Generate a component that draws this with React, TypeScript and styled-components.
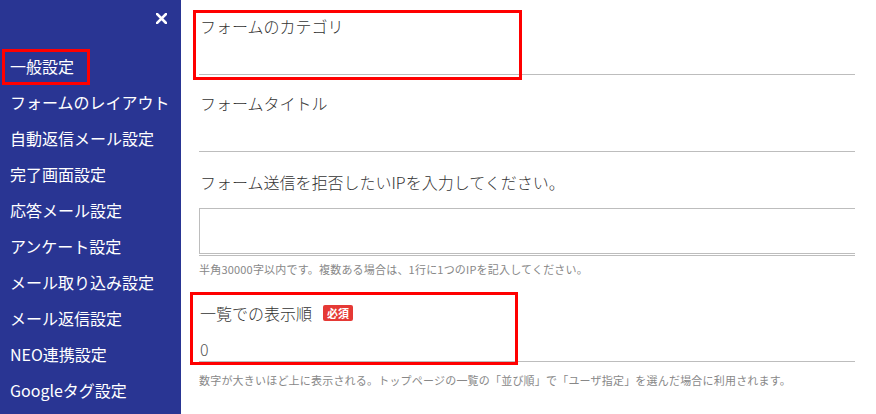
import React from 'react';
import styled, { createGlobalStyle } from 'styled-components';

const GlobalStyle = createGlobalStyle`
  html, body {
    margin: 0;
    padding: 0;
    background: #fff;
    overflow: hidden;
  }
  body {
    font-family: "Noto Sans CJK JP", "Noto Sans", sans-serif;
    color: #333;
  }
`;

const Page = styled.div`
  display: flex;
  width: 876px;
  height: 414px;
`;

const Sidebar = styled.nav`
  width: 181px;
  flex-shrink: 0;
  background-color: #293593;
  color: #fff;
  display: flex;
  flex-direction: column;
`;

const CloseRow = styled.div`
  height: 49px;
  display: flex;
  justify-content: flex-end;
  align-items: flex-start;
  padding: 13px 14px 0 0;
  box-sizing: border-box;
`;

const CloseButton = styled.button`
  background: none;
  border: none;
  padding: 0;
  width: 11px;
  height: 11px;
  cursor: pointer;
  display: flex;
`;

const MenuList = styled.ul`
  list-style: none;
  margin: 0;
  padding: 0;
`;

const MenuItem = styled.li<{ $highlighted?: boolean }>`
  position: relative;
  height: 36px;
  line-height: 35px;
  padding-left: 10px;
  font-size: 16px;
  white-space: nowrap;

  &::after {
    content: '';
    display: ${p => (p.$highlighted ? 'block' : 'none')};
    position: absolute;
    left: 2px;
    top: 0;
    width: 88px;
    height: 36px;
    border: 3px solid #ff0000;
    box-sizing: border-box;
  }
`;

const Main = styled.main`
  flex: 1;
  padding: 0 21px 0 18px;
  display: flex;
  flex-direction: column;
`;

const Field = styled.div<{ $top: number }>`
  position: relative;
  padding-top: ${p => p.$top}px;
`;

const Label = styled.div`
  font-size: 16px;
  font-weight: 300;
  line-height: 24px;
  padding-left: 1px;
  display: flex;
  align-items: center;
`;

const LineInput = styled.div`
  height: 36px;
  border-bottom: 1px solid #bdbdbd;
  font-size: 16px;
  font-weight: 300;
  line-height: 24px;
  color: #555;
  display: flex;
  align-items: flex-end;
  padding-left: 1px;
`;

const AreaWrap = styled.div`
  margin-top: 14px;
  padding-bottom: 1px;
  border-bottom: 1px solid #bdbdbd;
`;

const TextArea = styled.div`
  height: 44px;
  border: 1px solid #bdbdbd;
  border-right: none;
`;

const Hint = styled.div<{ $gap: number }>`
  margin-top: ${p => p.$gap}px;
  font-size: 11px;
  line-height: 16px;
  letter-spacing: 0.2px;
  color: #888;
  white-space: nowrap;
`;

const Badge = styled.span`
  margin-left: 11px;
  background: #e53935;
  color: #fff;
  font-size: 11px;
  font-weight: 700;
  line-height: 16px;
  height: 16px;
  padding: 0 4px;
  border-radius: 2px;
`;

const Highlight = styled.div<{ $left: number; $top: number; $w: number; $h: number }>`
  position: absolute;
  left: ${p => p.$left}px;
  top: ${p => p.$top}px;
  width: ${p => p.$w}px;
  height: ${p => p.$h}px;
  border: 3px solid #ff0000;
  box-sizing: border-box;
  pointer-events: none;
`;

const menuItems = [
  '一般設定',
  'フォームのレイアウト',
  '自動返信メール設定',
  '完了画面設定',
  '応答メール設定',
  'アンケート設定',
  'メール取り込み設定',
  'メール返信設定',
  'NEO連携設定',
  'Googleタグ設定',
];

const App: React.FC = () => {
  return (
    <>
      <GlobalStyle />
      <Page>
        <Sidebar>
          <CloseRow>
            <CloseButton aria-label="close">
              <svg width="11" height="11" viewBox="0 0 11 11">
                <path d="M1 1L10 10M10 1L1 10" stroke="#fff" strokeWidth="2.6" strokeLinecap="square" />
              </svg>
            </CloseButton>
          </CloseRow>
          <MenuList>
            {menuItems.map((item, i) => (
              <MenuItem key={item} $highlighted={i === 0}>
                {item}
              </MenuItem>
            ))}
          </MenuList>
        </Sidebar>
        <Main>
          <Field $top={14}>
            <Label>フォームのカテゴリ</Label>
            <LineInput />
            <Highlight $left={-6} $top={10} $w={329} $h={70} />
          </Field>
          <Field $top={16}>
            <Label>フォームタイトル</Label>
            <LineInput />
          </Field>
          <Field $top={18}>
            <Label>フォーム送信を拒否したいIPを入力してください。</Label>
            <AreaWrap>
              <TextArea />
            </AreaWrap>
            <Hint $gap={5}>半角30000字以内です。複数ある場合は、1行に1つのIPを記入してください。</Hint>
          </Field>
          <Field $top={24}>
            <Label>
              一覧での表示順<Badge>必須</Badge>
            </Label>
            <LineInput>0</LineInput>
            <Hint $gap={10}>
              数字が大きいほど上に表示される。トップページの一覧の「並び順」で「ユーザ指定」を選んだ場合に利用されます。
            </Hint>
            <Highlight $left={-9} $top={15} $w={328} $h={73} />
          </Field>
        </Main>
      </Page>
    </>
  );
};

export default App;
